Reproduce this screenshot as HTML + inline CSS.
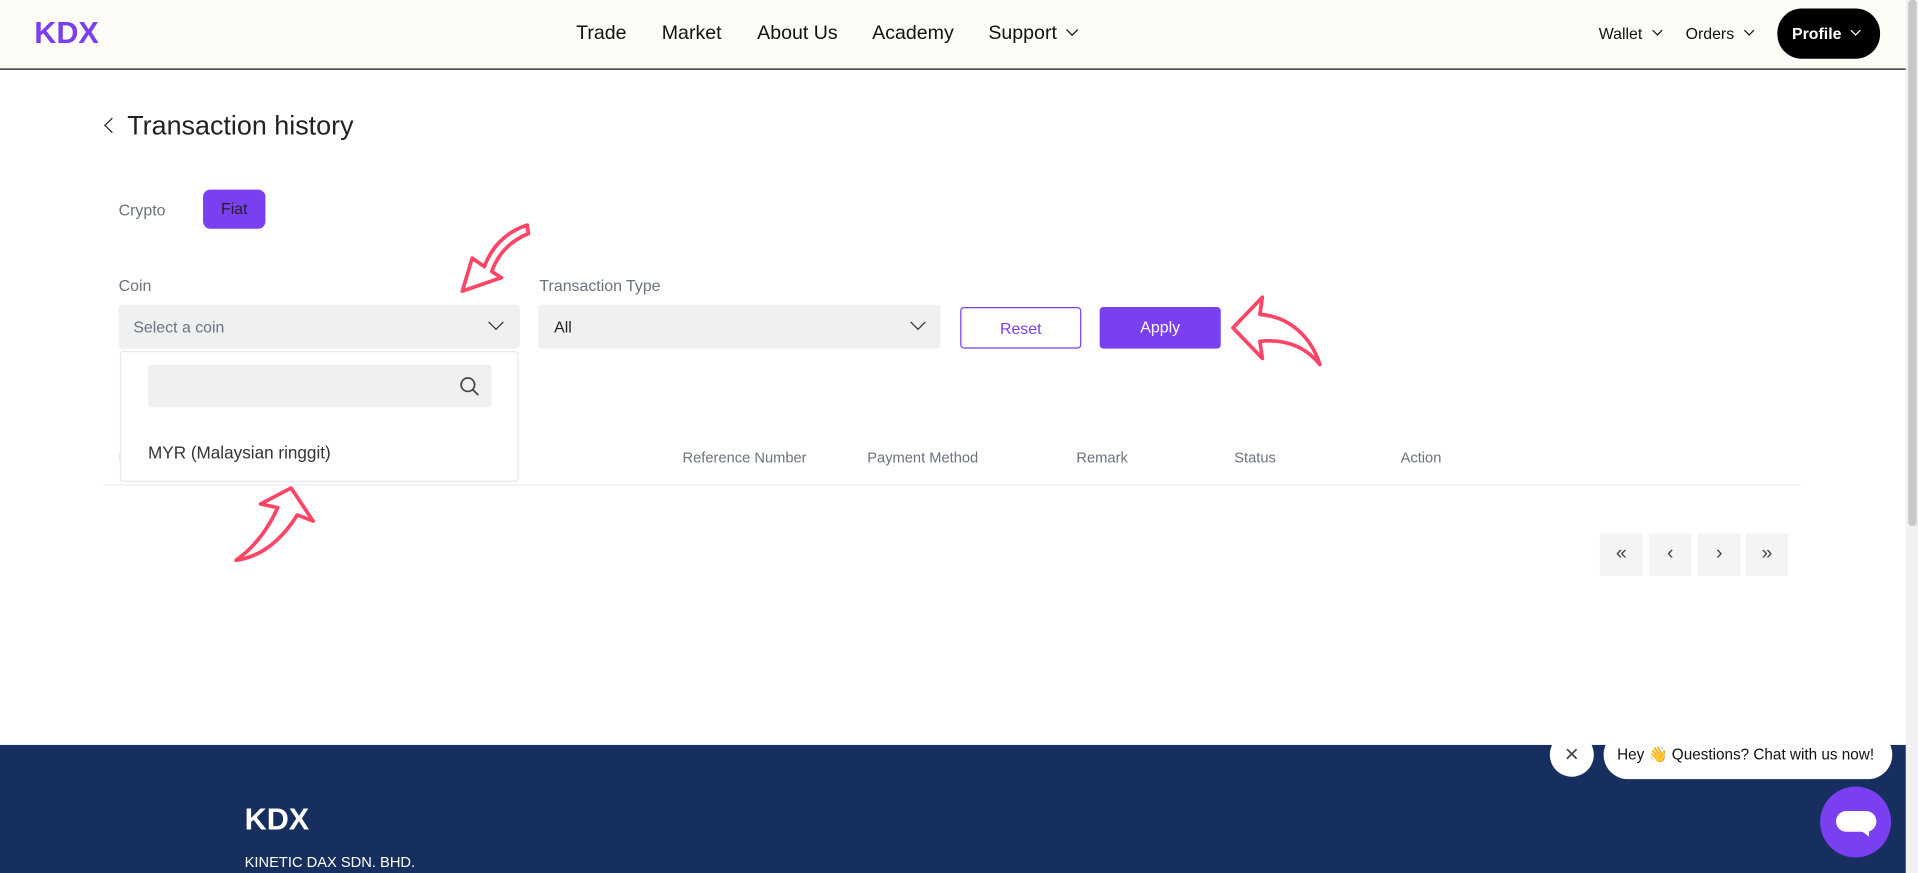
<!DOCTYPE html>
<html><head><meta charset="utf-8"><style>
html,body{margin:0;padding:0;width:1918px;height:873px;overflow:hidden;background:#fff;font-family:"Liberation Sans",sans-serif;}
#s{position:absolute;left:0;top:0;width:1568px;height:714px;transform:scale(1.2232);transform-origin:0 0;}
.a{position:absolute;white-space:nowrap;}
.hdr{left:0;top:0;width:1558px;height:56px;background:#fdfcf6;border-bottom:1.5px solid #111;}
.nav{font-size:16px;color:#111;top:19px;}
.chev{display:inline-block;width:6px;height:6px;border-right:1.8px solid #111;border-bottom:1.8px solid #111;transform:rotate(45deg);margin-left:9px;position:relative;top:-4px;}
.box{background:#eff0f2;border-radius:3px;}
.lbl{font-size:13px;color:#6b7280;}
.th{font-size:12px;color:#6b7280;top:367px;}
.pg{top:436px;width:35px;height:35px;background:#f3f4f6;color:#444;font-size:16px;text-align:center;line-height:34px;}
</style></head><body><div id="s">
<div class="a hdr"></div>
<div class="a" style="left:28px;top:13px;font-size:25px;font-weight:bold;color:#7b3ff2;letter-spacing:0px">KDX</div>
<div class="a nav" style="left:471px">Trade</div>
<div class="a nav" style="left:541px">Market</div>
<div class="a nav" style="left:619px">About Us</div>
<div class="a nav" style="left:713px">Academy</div>
<div class="a nav" style="left:808px">Support<span class="chev"></span></div>
<div class="a" style="left:1307px;top:20px;font-size:13px;color:#111">Wallet<span class="chev" style="width:5px;height:5px"></span></div>
<div class="a" style="left:1378px;top:20px;font-size:13px;color:#111">Orders<span class="chev" style="width:5px;height:5px"></span></div>
<div class="a" style="left:1453px;top:7px;width:84px;height:41px;background:#000;border-radius:20px;color:#fff;font-size:13px;font-weight:bold;line-height:41px;text-indent:12px">Profile<span class="chev" style="width:5px;height:5px;border-color:#fff"></span></div>
<div class="a" style="left:1558px;top:0;width:10px;height:714px;background:#f1f1f1"></div>
<div class="a" style="left:1560px;top:0;width:7px;height:430px;background:#c8c8c8;border-radius:3px"></div>

<div class="a" style="left:87px;top:98px;width:8px;height:8px;border-left:1.8px solid #222;border-bottom:1.8px solid #222;transform:rotate(45deg)"></div>
<div class="a" style="left:104px;top:90px;font-size:22px;color:#222">Transaction history</div>

<div class="a" style="left:97px;top:164px;font-size:13px;color:#6b7280">Crypto</div>
<div class="a" style="left:166px;top:155px;width:51px;height:32px;background:#7b3ff2;border-radius:6px;font-size:13px;color:#222;text-align:center;line-height:32px">Fiat</div>

<div class="a lbl" style="left:97px;top:226px">Coin</div>
<div class="a lbl" style="left:441px;top:226px">Transaction Type</div>
<div class="a box" style="left:97px;top:249px;width:328px;height:36px"></div>
<div class="a" style="left:109px;top:260px;font-size:13px;color:#6b7280">Select a coin</div>
<div class="a" style="left:401px;top:259px;width:8px;height:8px;border-right:1.6px solid #333;border-bottom:1.6px solid #333;transform:rotate(45deg)"></div>
<div class="a box" style="left:440px;top:249px;width:329px;height:36px"></div>
<div class="a" style="left:453px;top:260px;font-size:13px;color:#222">All</div>
<div class="a" style="left:746px;top:259px;width:8px;height:8px;border-right:1.6px solid #333;border-bottom:1.6px solid #333;transform:rotate(45deg)"></div>
<div class="a" style="left:785px;top:251px;border:1px solid #7b3ff2;border-radius:3px;color:#7b3ff2;font-size:13px;text-align:center;line-height:33px;box-sizing:border-box;width:99px;height:34px">Reset</div>
<div class="a" style="left:899px;top:251px;width:99px;height:34px;background:#7b3ff2;border-radius:3px;color:#fff;font-size:13px;text-align:center;line-height:34px">Apply</div>

<div class="a th" style="left:97px">D</div>
<div class="a th" style="left:558px">Reference Number</div>
<div class="a th" style="left:709px">Payment Method</div>
<div class="a th" style="left:880px">Remark</div>
<div class="a th" style="left:1009px">Status</div>
<div class="a th" style="left:1145px">Action</div>
<div class="a" style="left:84px;top:396px;width:1388px;height:1px;background:#eceef1"></div>

<div class="a" style="left:98px;top:287px;width:326px;height:107px;background:#fff;border:1px solid #e5e7eb;border-radius:3px;box-sizing:border-box"></div>
<div class="a box" style="left:121px;top:298px;width:281px;height:35px"></div>
<svg class="a" style="left:375px;top:307px" width="18" height="18" viewBox="0 0 18 18"><circle cx="7.5" cy="7.5" r="5.5" fill="none" stroke="#444" stroke-width="1.4"/><path d="M11.5 11.5L16 16" stroke="#444" stroke-width="1.4"/></svg>
<div class="a" style="left:121px;top:362px;font-size:14px;color:#333">MYR (Malaysian ringgit)</div>

<div class="a pg" style="left:1308px">«</div>
<div class="a pg" style="left:1348px">‹</div>
<div class="a pg" style="left:1388px">›</div>
<div class="a pg" style="left:1427px">»</div>

<div class="a" style="left:0;top:609px;width:1558px;height:105px;background:#172f5e"></div>
<div class="a" style="left:200px;top:656px;font-size:25px;font-weight:bold;color:#fff">KDX</div>
<div class="a" style="left:200px;top:698px;font-size:12px;color:#fff">KINETIC DAX SDN. BHD.</div>

<div class="a" style="left:1267px;top:599px;width:36px;height:36px;border-radius:50%;background:#fff;color:#444;font-size:20px;text-align:center;line-height:36px">×</div>
<div class="a" style="left:1311px;top:597px;width:236px;height:40px;border-radius:20px;background:#fff;font-size:12.5px;color:#111;line-height:40px;text-indent:11px">Hey 👋 Questions? Chat with us now!</div>
<div class="a" style="left:1488px;top:643px;width:58px;height:58px;border-radius:50%;background:#7b3ff2"></div>
<div class="a" style="left:1501px;top:663px;width:33px;height:17px;border-radius:9px;background:#fff"></div>
<svg class="a" style="left:1520px;top:678px" width="10" height="8"><path d="M0 0L8 0L8 6Z" fill="#fff"/></svg>

<svg class="a" style="left:0;top:0" width="1568" height="714" viewBox="0 0 1568 714">
<g fill="#fff" stroke="#ff4466" stroke-width="3" stroke-linejoin="round">
<path d="M431,184 C412,190 401,204 396,218 L386,211 L378,238 L410,227 L402,222 C407,208 417,197 432,191 Z"/>
<path d="M1008,268 L1032,243 L1030,257 C1055,259 1072,276 1079,298 C1067,283 1050,277 1030,279 L1032,293 Z"/>
<path d="M238,399 L256,426 L243,421 C231,440 215,455 193,458 C207,448 219,433 227,415 L213,412 Z"/>
</g></svg>
</div></body></html>
